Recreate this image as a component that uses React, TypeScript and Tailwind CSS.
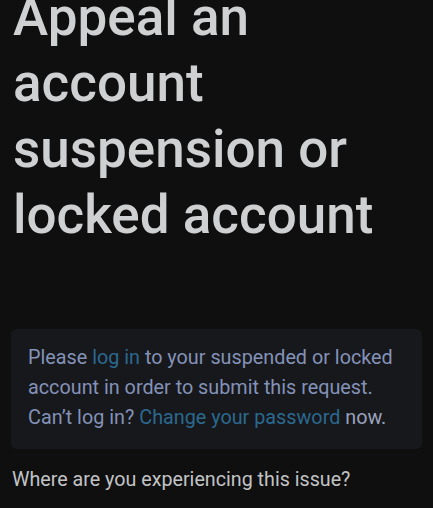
import React from "react";

const App = () => {
  return (
    <div className="h-[508px] w-[433px] overflow-hidden bg-[#0f0f10] font-['Roboto',sans-serif]">
      <h1 className="-mt-[16px] px-[13px] text-[53px] font-medium leading-[66px] text-[#cfd0d1]">
        Appeal an account suspension or locked account
      </h1>

      <div className="mx-[11px] mt-[81px] rounded-md bg-[#17181b] px-[17px] pt-[14px] pb-[16px] text-[19.8px] leading-[30px] text-[#8492b8]">
        Please <span className="text-[#2b6990]">log in</span> to your suspended or locked account
        in order to submit this request. Can’t log in?{" "}
        <span className="text-[#2b6990]">Change your password</span>{" "}
        <span className="text-[#9ba2bd]">now.</span>
      </div>

      <p className="mt-[19px] px-[12px] text-[19.7px] leading-[24px] text-[#c2c3c5]">
        Where are you experiencing this issue?
      </p>
    </div>
  );
};

export default App;
